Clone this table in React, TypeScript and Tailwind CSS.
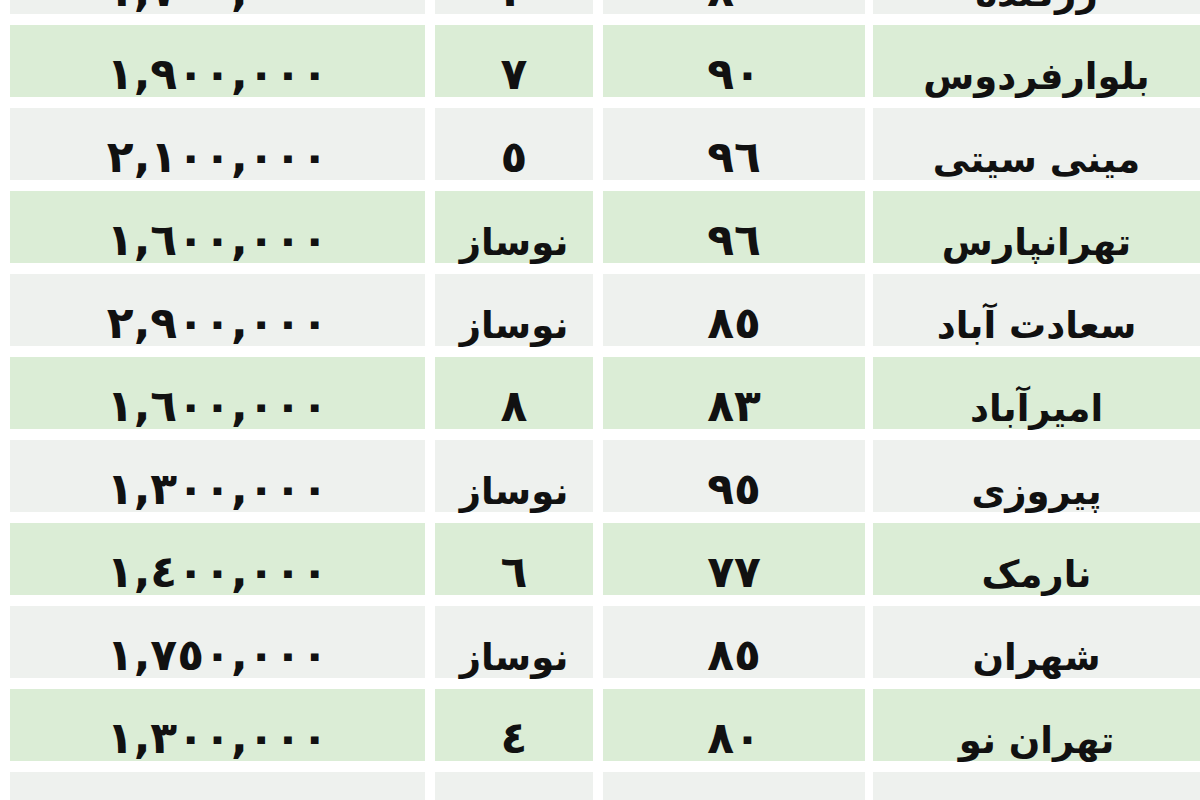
import React from "react";

type Row = { price: string; age: string; area: string; name: string };

const rows: Row[] = [
  { price: "١,٧٠٠,٠٠٠", age: "٢", area: "٨٠", name: "زرگنده" },
  { price: "١,٩٠٠,٠٠٠", age: "٧", area: "٩٠", name: "بلوارفردوس" },
  { price: "٢,١٠٠,٠٠٠", age: "٥", area: "٩٦", name: "مینی سیتی" },
  { price: "١,٦٠٠,٠٠٠", age: "نوساز", area: "٩٦", name: "تهرانپارس" },
  { price: "٢,٩٠٠,٠٠٠", age: "نوساز", area: "٨٥", name: "سعادت آباد" },
  { price: "١,٦٠٠,٠٠٠", age: "٨", area: "٨٣", name: "امیرآباد" },
  { price: "١,٣٠٠,٠٠٠", age: "نوساز", area: "٩٥", name: "پیروزی" },
  { price: "١,٤٠٠,٠٠٠", age: "٦", area: "٧٧", name: "نارمک" },
  { price: "١,٧٥٠,٠٠٠", age: "نوساز", area: "٨٥", name: "شهران" },
  { price: "١,٣٠٠,٠٠٠", age: "٤", area: "٨٠", name: "تهران نو" },
  { price: "١,٥٠٠,٠٠٠", age: "نوساز", area: "٨٠", name: "ونک" },
];

const isWord = (s: string) => /[\u0621-\u064A\u067E-\u06CC]/.test(s);

function Cell({ text, className }: { text: string; className: string }) {
  const word = isWord(text);
  return (
    <div
      className={
        "flex items-center justify-center " +
        (word ? "pt-[31px] text-[37px] " : "pt-[26px] text-[44px] tracking-[-3px] ") +
        className
      }
    >
      <span className="leading-none" dir={word ? "rtl" : "ltr"}>
        {text}
      </span>
    </div>
  );
}

export default function App() {
  return (
    <div
      className="w-[1200px] h-[800px] overflow-hidden bg-white text-[#111] font-bold"
      style={{ fontFamily: '"DejaVu Sans", sans-serif' }}
    >
      <div className="-mt-[58px] flex flex-col gap-[11px]">
        {rows.map((r, i) => {
          const bg = i % 2 === 1 ? "bg-[#dbedd6]" : "bg-[#eef1ee]";
          return (
            <div key={i} className="flex h-[72px]">
              <Cell text={r.price} className={"ml-[10px] w-[415px] " + bg} />
              <Cell text={r.age} className={"ml-[10px] w-[158px] " + bg} />
              <Cell text={r.area} className={"ml-[10px] w-[262px] " + bg} />
              <Cell text={r.name} className={"ml-[8px] flex-1 " + bg} />
            </div>
          );
        })}
      </div>
    </div>
  );
}
